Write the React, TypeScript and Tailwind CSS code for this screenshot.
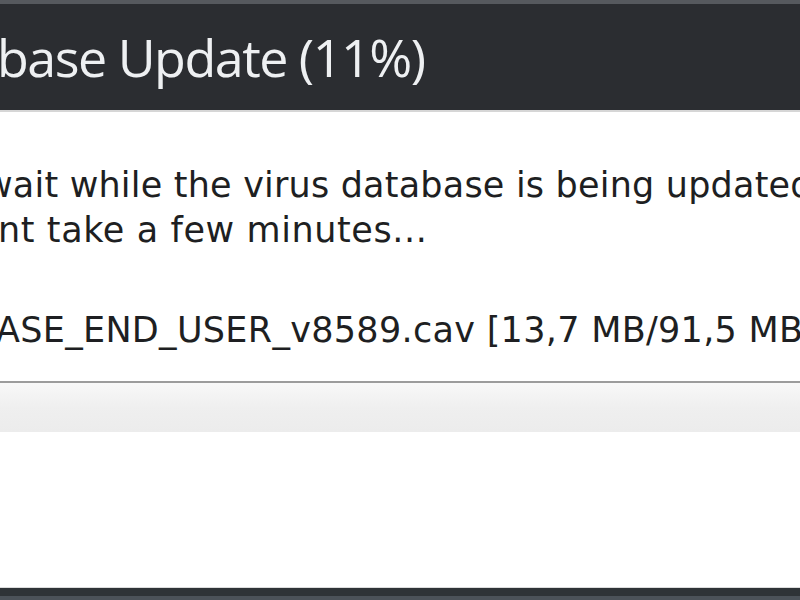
export default function App() {
  return (
    <div className="w-[800px] h-[600px] overflow-hidden bg-white flex flex-col">
      {/* window title bar */}
      <div className="h-[4px] bg-[#56595e]" />
      <div className="h-[108px] bg-[#2b2d31] pt-[27px] border-b-2 border-[#d6d6d6]">
        <h1 className="-ml-[3px] whitespace-nowrap text-[52px] leading-none tracking-[-1.5px] text-[#eef0f2] font-['Open_Sans',sans-serif]">
          base Update (11%)
        </h1>
      </div>

      {/* body */}
      <div className="pt-[51px] whitespace-nowrap text-[35px] leading-[45px] text-[#1e1f22] font-['DejaVu_Sans',sans-serif]">
        <p className="-ml-[16px] tracking-[0.2px]">wait while the virus database is being updated.</p>
        <p className="-ml-[2px] tracking-[0.6px]">nt take a few minutes...</p>
        <p className="mt-[55px] -ml-[4px] tracking-[0.3px]">ASE_END_USER_v8589.cav [13,7 MB/91,5 MB]</p>
      </div>

      {/* progress bar */}
      <div className="mt-[28px] border-t-2 border-[#9c9c9c] h-[51px] bg-gradient-to-b from-[#f8f8f8] via-[#efefef] to-[#ececec]" />

      <div className="flex-1" />
      <div className="h-px bg-[#dcdcdc]" />
      <div className="h-[8px] bg-[#2f3337]" />
      <div className="h-[4px] bg-[#4c5259]" />
    </div>
  );
}
